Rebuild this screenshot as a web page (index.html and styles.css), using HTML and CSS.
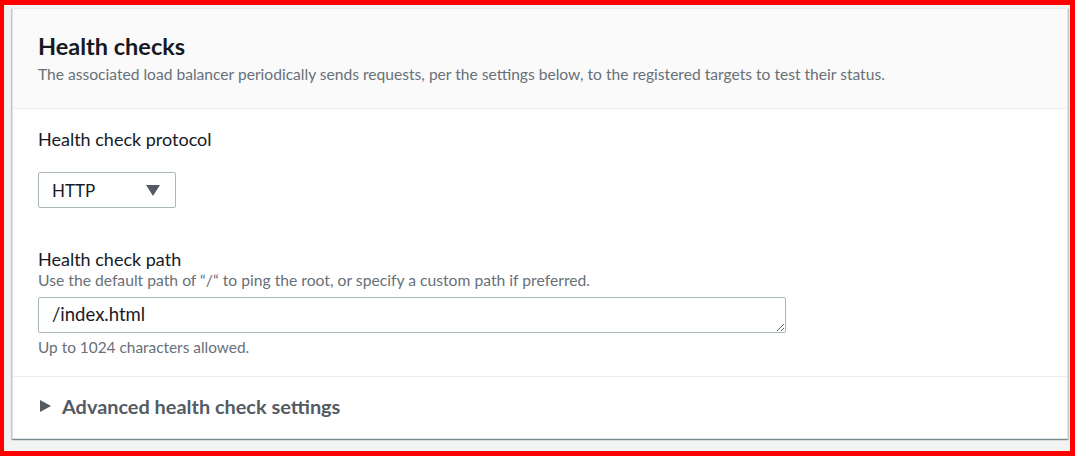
FILE: index.html
```html
<!DOCTYPE html>
<html>
<head>
<meta charset="utf-8">
<link rel="stylesheet" href="styles.css">
</head>
<body>
<div class="frame">
  <section class="card">
    <header class="card-header">
      <h2 class="title">Health checks</h2>
      <p class="subtitle">The associated load balancer periodically sends requests, per the settings below, to the registered targets to test their status.</p>
    </header>
    <div class="card-body">
      <div class="field field-protocol">
        <div class="label">Health check protocol</div>
        <div class="select">
          <span class="select-value">HTTP</span>
          <svg class="caret" width="14" height="11" viewBox="0 0 14 11"><path d="M0 0 H14 L7 11 Z" fill="#545b64"/></svg>
        </div>
      </div>
      <div class="field field-path">
        <div class="label">Health check path</div>
        <div class="desc">Use the default path of “/“ to ping the root, or specify a custom path if preferred.</div>
        <textarea class="input" rows="1">/index.html</textarea>
        <div class="hint">Up to 1024 characters allowed.</div>
      </div>
    </div>
    <div class="expand">
      <svg class="expand-icon" width="11" height="12" viewBox="0 0 11 12"><path d="M0 0 L11 6 L0 12 Z" fill="#545b64"/></svg>
      <span class="expand-text">Advanced health check settings</span>
    </div>
  </section>
</div>
</body>
</html>
```
FILE: styles.css
```css
* { box-sizing: border-box; }
html, body { margin: 0; padding: 0; }
body {
  width: 1075px;
  height: 456px;
  overflow: hidden;
  font-family: "Lato", "Liberation Sans", sans-serif;
  color: #16191f;
}
.frame {
  width: 1075px;
  height: 456px;
  border-style: solid;
  border-color: #ff0000;
  border-width: 5px 5px 5px 4px;
  background: #f2f3f3;
  padding: 3px 2px 0 8px;
}
.card {
  width: 1056px;
  height: 431px;
  background: #ffffff;
  border: 1px solid #dfe3e6;
  border-top-color: #eaeded;
  box-shadow: 0 1px 1px 0 rgba(0, 28, 36, 0.3), 1px 1px 1px 0 rgba(0, 28, 36, 0.15), -1px 1px 1px 0 rgba(0, 28, 36, 0.15);
  display: flex;
  flex-direction: column;
}
.card-header {
  background: #fafafa;
  border-bottom: 1px solid #eaeded;
  height: 100px;
  padding: 23px 25px 0 25px;
}
.title {
  margin: 0;
  font-size: 23.5px;
  line-height: 28px;
  font-weight: 700;
  color: #16191f;
}
.subtitle {
  margin: 4px 0 0 0;
  font-size: 15.6px;
  line-height: 20px;
  color: #687078;
  white-space: nowrap;
}
.card-body {
  padding: 0 25px;
  border-bottom: 1px solid #eaeded;
  height: 268px;
}
.field-protocol { padding-top: 18px; }
.label {
  font-size: 18px;
  line-height: 24px;
  color: #16191f;
}
.select {
  margin-top: 21px;
  width: 138px;
  height: 36px;
  border: 1px solid #aab7b8;
  border-radius: 2px;
  display: flex;
  align-items: center;
  justify-content: space-between;
  padding: 0 15px 0 13px;
  background: #fff;
}
.select-value {
  font-size: 17px;
  color: #16191f;
}
.field-path { padding-top: 39px; }
.desc {
  font-size: 15.7px;
  line-height: 18px;
  color: #687078;
}
.input {
  display: block;
  margin-top: 8px;
  width: 748px;
  height: 36px;
  border: 1px solid #aab7b8;
  border-radius: 2px;
  padding: 5px 13px;
  font-family: "Lato", "Liberation Sans", sans-serif;
  font-size: 18.5px;
  line-height: 23px;
  color: #16191f;
  resize: vertical;
  overflow: hidden;
}
.hint {
  margin-top: 4px;
  font-size: 15.4px;
  line-height: 20px;
  color: #687078;
}
.expand {
  display: flex;
  align-items: center;
  gap: 11px;
  padding: 0 0 3px 27px;
  height: 61px;
}
.expand-text {
  font-size: 19.9px;
  font-weight: 700;
  color: #545b64;
}
```
